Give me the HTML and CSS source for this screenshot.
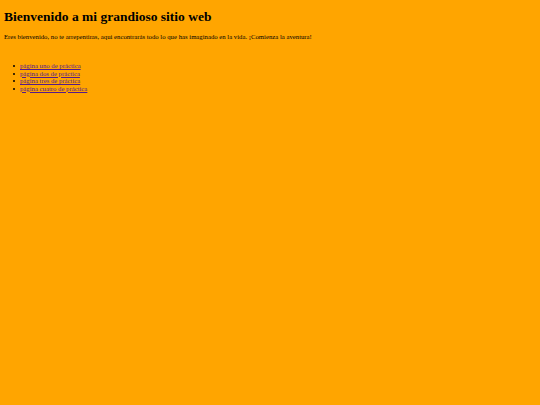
FILE: index.html
```html
<!DOCTYPE html>
<html lang="es">
<head>
<meta charset="utf-8">
<title>Bienvenido</title>
<link rel="stylesheet" href="styles.css">
</head>
<body class="page">
<h1 class="title">Bienvenido a mi grandioso sitio web</h1>
<p class="intro">Eres bienvenido, no te arrepentiras, aqui encontrarás todo lo que has imaginado en la vida. ¡Comienza la aventura!</p>
<ul class="links">
<li class="item"><a class="link" href="#">página uno de práctica</a></li>
<li class="item"><a class="link" href="#">página dos de práctica</a></li>
<li class="item"><a class="link" href="#">página tres de práctica</a></li>
<li class="item"><a class="link" href="#">página cuatro de práctica</a></li>
</ul>
</body>
</html>
```
FILE: styles.css
```css
html, body { height: 100%; }
.page {
  margin: 0;
  padding: 4px;
  box-sizing: border-box;
  background: #ffa500;
  font-family: "Liberation Serif", "Times New Roman", serif;
  color: #000;
}
.title {
  font-size: 13.5px;
  font-weight: bold;
  margin: 5px 0 0 0;
}
.intro {
  font-size: 6.73px;
  margin: 8px 0 0 0;
}
.links {
  font-size: 6.73px;
  line-height: 7.5px;
  margin: 22px 0 0 0;
  padding-left: 16px;
  list-style: none;
}
.item::before {
  content: "";
  display: inline-block;
  width: 2px;
  height: 2px;
  border-radius: 50%;
  background: #000;
  margin-left: -7px;
  margin-right: 5px;
  vertical-align: 1px;
}
.link { color: #551a8b; }
```
